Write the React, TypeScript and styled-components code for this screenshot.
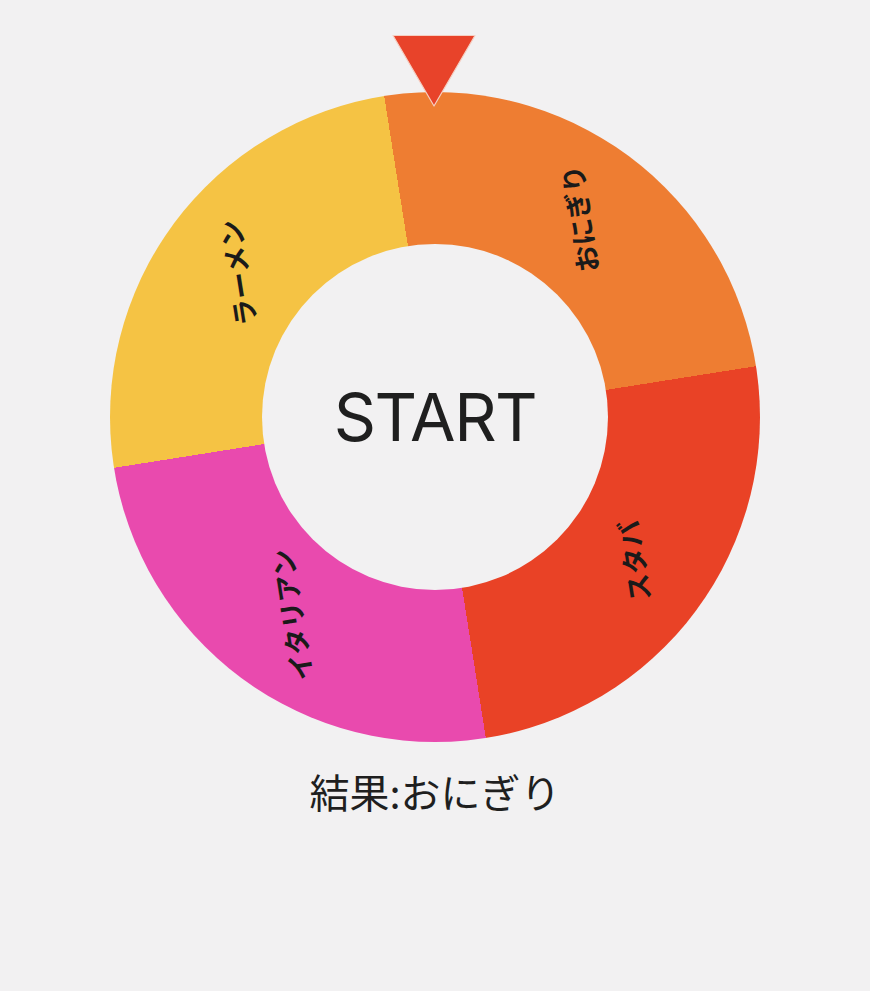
import React from "react";
import styled, { createGlobalStyle } from "styled-components";

const GlobalStyle = createGlobalStyle`
  html, body {
    margin: 0;
    padding: 0;
    background: #f2f1f2;
  }
  body {
    font-family: Inter, "Noto Sans CJK JP", sans-serif;
    color: #1f1f1f;
  }
`;

type Slice = { label: string; color: string };

const SLICES: Slice[] = [
  { label: "おにぎり", color: "#ee7d32" },
  { label: "スタバ", color: "#e94226" },
  { label: "イタリアン", color: "#e94aae" },
  { label: "ラーメン", color: "#f5c344" },
];

const OFFSET = -9; // wheel resting rotation, degrees
const SIZE = 650;
const HOLE = 346;
const LABEL_RADIUS = 245;

const Page = styled.main`
  display: flex;
  flex-direction: column;
  align-items: center;
  padding-top: 92px;
`;

const WheelArea = styled.div`
  position: relative;
  width: ${SIZE}px;
  height: ${SIZE}px;
`;

const Wheel = styled.div<{ $stops: string }>`
  width: 100%;
  height: 100%;
  border-radius: 50%;
  background: conic-gradient(from ${OFFSET}deg, ${(p) => p.$stops});
  display: flex;
  align-items: center;
  justify-content: center;
`;

const StartButton = styled.button`
  width: ${HOLE}px;
  height: ${HOLE}px;
  border-radius: 50%;
  border: none;
  background: #f2f1f2;
  font-family: Inter, "Liberation Sans", sans-serif;
  font-size: 66px;
  letter-spacing: -1.5px;
  font-weight: 400;
  color: #1f1f1f;
  padding: 0;
  cursor: pointer;
`;

const SliceLabel = styled.span<{ $x: number; $y: number }>`
  position: absolute;
  left: ${(p) => p.$x}px;
  top: ${(p) => p.$y}px;
  transform: translate(-50%, -50%) rotate(${OFFSET - 90}deg);
  font-family: "Noto Sans CJK JP", sans-serif;
  font-size: 27px;
  font-weight: 700;
  color: #1a1a1a;
  white-space: nowrap;
  pointer-events: none;
`;

const Pointer = styled.svg`
  position: absolute;
  top: -58px;
  left: 50%;
  transform: translateX(-50%);
  margin-left: -1px;
`;

const Result = styled.p`
  margin: 25px 0 0;
  font-family: "Noto Sans CJK JP", sans-serif;
  font-size: 40px;
  line-height: 48px;
  font-weight: 400;
  color: #1f1f1f;
`;

export default function App() {
  const step = 360 / SLICES.length;
  const stops = SLICES.map(
    (s, i) => `${s.color} ${i * step}deg ${(i + 1) * step}deg`
  ).join(", ");
  const c = SIZE / 2;

  return (
    <>
      <GlobalStyle />
      <Page>
        <WheelArea>
          <Wheel $stops={stops}>
            <StartButton type="button">START</StartButton>
          </Wheel>
          {SLICES.map((s, i) => {
            const a = ((OFFSET + step * (i + 0.5)) * Math.PI) / 180;
            return (
              <SliceLabel
                key={s.label}
                $x={c + LABEL_RADIUS * Math.sin(a)}
                $y={c - LABEL_RADIUS * Math.cos(a)}
              >
                {s.label}
              </SliceLabel>
            );
          })}
          <Pointer width="86" height="74" viewBox="0 0 86 74">
            <polygon
              points="2,1.5 84,1.5 43,72"
              fill="#e8432a"
              stroke="#f5cfc2"
              strokeWidth="1.2"
              strokeLinejoin="round"
            />
          </Pointer>
        </WheelArea>
        <Result>結果:おにぎり</Result>
      </Page>
    </>
  );
}
